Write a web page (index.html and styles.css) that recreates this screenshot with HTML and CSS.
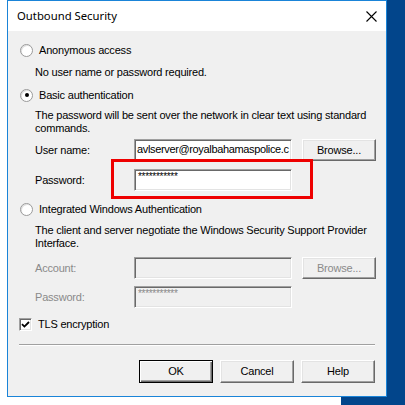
FILE: index.html
```html
<!DOCTYPE html>
<html>
<head>
<meta charset="utf-8">
<link rel="stylesheet" href="styles.css">
</head>
<body>
<div class="desktop"></div>
<div class="dialog">
  <div class="titlebar">
    <span class="title">Outbound Security</span>
    <svg class="close" width="11" height="11" viewBox="0 0 11 11"><path d="M0.5 0.5L10.5 10.5M10.5 0.5L0.5 10.5" stroke="#000" stroke-width="1.1" fill="none"/></svg>
  </div>
  <div class="body">
    <div class="opt r1"><span class="radio"></span><span>Anonymous access</span></div>
    <div class="desc d1">No user name or password required.</div>
    <div class="opt r2"><span class="radio checked"></span><span>Basic authentication</span></div>
    <div class="desc d2">The password will be sent over the network in clear text using standard<br>commands.</div>
    <div class="row rw1"><span class="lbl">User name:</span><span class="field user">avlserver@royalbahamaspolice.c</span><span class="btn">Browse...</span></div>
    <div class="row rw2"><span class="lbl">Password:</span><span class="field pw">***********</span></div>
    <div class="opt r3"><span class="radio"></span><span>Integrated Windows Authentication</span></div>
    <div class="desc d3">The client and server negotiate the Windows Security Support Provider<br>Interface.</div>
    <div class="row rw3 dis"><span class="lbl">Account:</span><span class="field off"></span><span class="btn off">Browse...</span></div>
    <div class="row rw4 dis"><span class="lbl">Password:</span><span class="field off pw">***********</span></div>
    <div class="opt r4"><span class="check"><svg width="9" height="9" viewBox="0 0 9 9"><path d="M1 4.2L3.4 6.6L8 2" stroke="#000" stroke-width="1.8" fill="none"/></svg></span><span>TLS encryption</span></div>
    <div class="sep"></div>
    <div class="buttons">
      <span class="btn def">OK</span>
      <span class="btn">Cancel</span>
      <span class="btn">Help</span>
    </div>
  </div>
  <div class="highlight"></div>
</div>
</body>
</html>
```

FILE: styles.css
```css
html, body {
  margin: 0;
  padding: 0;
  background: #fff;
  width: 405px;
  height: 405px;
  overflow: hidden;
  position: relative;
}
.desktop {
  position: absolute;
  left: 341px;
  top: 0;
  right: 0;
  bottom: 0;
  background: #02458b;
}
.dialog {
  position: absolute;
  left: 7px;
  top: 0;
  width: 380px;
  height: 397px;
  box-sizing: border-box;
  border: 1px solid #1a84d8;
  background: #f0f0f0;
  font-family: "Liberation Sans", Arial, sans-serif;
  font-size: 11px;
  letter-spacing: -0.2px;
  color: #000;
}
.titlebar {
  height: 30px;
  background: #fff;
  display: flex;
  align-items: center;
  position: relative;
}
.title {
  font-family: "Noto Sans", "Open Sans", sans-serif;
  font-size: 11.3px;
  letter-spacing: 0;
  margin-left: 9px;
  margin-top: -1px;
}
.close {
  position: absolute;
  left: 358px;
  top: 10px;
}
.body {
  display: flex;
  flex-direction: column;
  padding-left: 11px;
}
.opt {
  display: flex;
  align-items: center;
  height: 16px;
}
.radio {
  width: 11px;
  height: 11px;
  border-radius: 50%;
  border: 1px solid #9a9a9a;
  background: #fff;
  box-shadow: inset 1px 1px 0 #e0e0e0;
  margin-right: 6px;
  position: relative;
  margin-left: 1px;
}
.radio.checked::after {
  content: "";
  position: absolute;
  left: 3.5px;
  top: 3.5px;
  width: 4px;
  height: 4px;
  border-radius: 50%;
  background: #000;
}
.check {
  width: 13px;
  height: 13px;
  box-sizing: border-box;
  border: 1px solid;
  border-color: #a0a0a0 #fff #fff #a0a0a0;
  box-shadow: inset 1px 1px 0 #696969, inset -1px -1px 0 #e3e3e3;
  background: #fff;
  margin-right: 6px;
  display: flex;
  align-items: center;
  justify-content: center;
}
.desc {
  margin-left: 16px;
  line-height: 13px;
}
.r1 { margin-top: 11px; }
.d1 { margin-top: 6px; line-height: 16px; }
.r2 { margin-top: 7px; }
.d2 { margin-top: 6px; }
.rw1 { margin-top: 4px; }
.rw2 { margin-top: 8px; }
.r3 { margin-top: 10px; }
.d3 { margin-top: 7px; }
.rw3 { margin-top: 7px; }
.rw4 { margin-top: 7px; }
.r4 { margin-top: 8px; }
.row {
  display: flex;
  align-items: center;
  height: 22px;
  margin-left: 16px;
}
.lbl {
  width: 99px;
}
.dis .lbl { color: #8a8a8a; }
.field {
  width: 158px;
  height: 22px;
  box-sizing: border-box;
  border: 1px solid;
  border-color: #a0a0a0 #fff #fff #a0a0a0;
  box-shadow: inset 1px 1px 0 #696969, inset -1px -1px 0 #e3e3e3;
  background: #fff;
  padding-left: 3px;
  line-height: 19px;
  white-space: nowrap;
  overflow: hidden;
}
.field.user { letter-spacing: -0.35px; padding-left: 2px; }
.field.pw { font-size: 10px; letter-spacing: -0.3px; line-height: 14px; }
.field.off { background: #f0f0f0; color: #8a8a8a; }
.btn {
  box-sizing: border-box;
  width: 74px;
  height: 22px;
  display: flex;
  align-items: center;
  justify-content: center;
  background: #f0f0f0;
  border: 1px solid;
  border-color: #fff #696969 #696969 #fff;
  box-shadow: inset -1px -1px 0 #a0a0a0, inset 1px 1px 0 #e3e3e3;
  padding-bottom: 1px;
}
.row .btn { margin-left: 10px; }
.btn.off { color: #8a8a8a; }
.sep {
  margin-top: 12px;
  width: 356px;
  height: 1px;
  background: #a0a0a0;
  border-bottom: 1px solid #fff;
}
.buttons {
  display: flex;
  gap: 7px;
  margin-top: 14px;
  padding-left: 120px;
  height: 23px;
}
.buttons .btn {
  height: 23px;
}
.btn.def {
  border-color: #000;
  box-shadow: inset 1px 1px 0 #fff, inset -1px -1px 0 #696969, inset -2px -2px 0 #a0a0a0;
}
.highlight {
  position: absolute;
  left: 103px;
  top: 158px;
  width: 202px;
  height: 40px;
  box-sizing: border-box;
  border: 3px solid #ee0000;
}
```
